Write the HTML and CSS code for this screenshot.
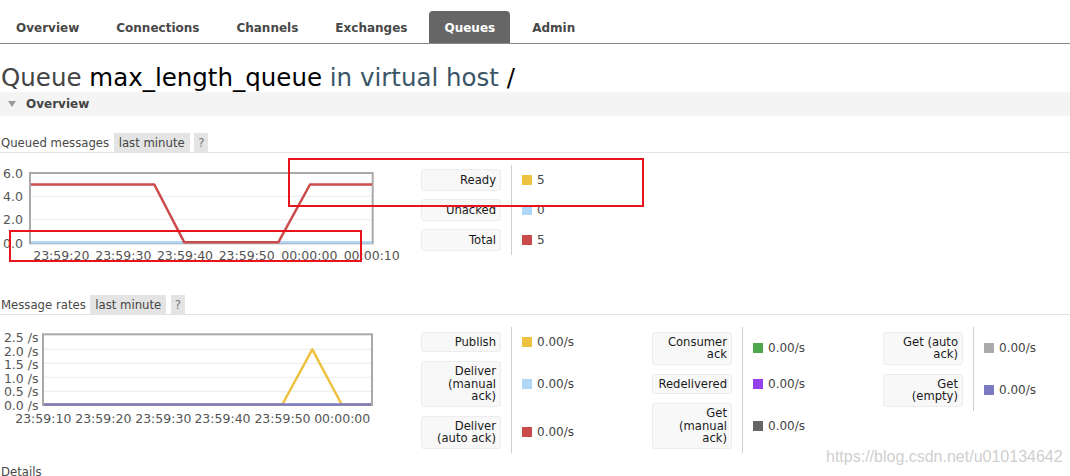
FILE: index.html
```html
<!DOCTYPE html>
<html>
<head>
<meta charset="utf-8">
<title>RabbitMQ Management</title>
<link rel="stylesheet" href="styles.css">
</head>
<body>
<nav class="tabs">
  <a class="tab">Overview</a>
  <a class="tab">Connections</a>
  <a class="tab">Channels</a>
  <a class="tab">Exchanges</a>
  <a class="tab active">Queues</a>
  <a class="tab">Admin</a>
</nav>

<h1 class="title">Queue <b>max_length_queue</b> <span class="vh">in virtual host</span> <b>/</b></h1>

<div class="bar"><span class="tri"></span>Overview</div>

<div class="sub"><span>Queued messages</span><span class="pill">last minute</span><span class="pill q">?</span></div>
<div class="panel">
  <svg class="chart" width="421" height="125" viewBox="0 153 421 125">
    <line class="grid" x1="31" y1="196.3" x2="372" y2="196.3"/>
    <line class="grid" x1="31" y1="219.7" x2="372" y2="219.7"/>
    <rect class="frame" x="30" y="173" width="342.7" height="70.3"/>
    <polyline class="ln ln-blue" points="31,242.3 372,242.3"/>
    <polyline class="ln ln-red" points="31,184.5 154.3,184.5 184.3,242.3 278.3,242.3 310,184.5 372,184.5"/>
    <text class="yl" x="23" y="178">6.0</text>
    <text class="yl" x="23" y="201.4">4.0</text>
    <text class="yl" x="23" y="224.4">2.0</text>
    <text class="yl" x="23" y="248">0.0</text>
    <text class="xl" x="61.3" y="260.3">23:59:20</text>
    <text class="xl" x="123.3" y="260.3">23:59:30</text>
    <text class="xl" x="185" y="260.3">23:59:40</text>
    <text class="xl" x="246.7" y="260.3">23:59:50</text>
    <text class="xl" x="309.3" y="260.3">00:00:00</text>
    <text class="xl" x="371.7" y="260.3">00:00:10</text>
  </svg>
  <div class="facts facts-q">
    <div class="group">
      <div class="th"><div class="box">Ready</div></div>
      <div class="td"><span class="sw c-yellow"></span>5</div>
      <div class="th"><div class="box">Unacked</div></div>
      <div class="td"><span class="sw c-lblue"></span>0</div>
      <div class="th"><div class="box">Total</div></div>
      <div class="td"><span class="sw c-red"></span>5</div>
    </div>
  </div>
</div>

<div class="sub"><span>Message rates</span><span class="pill">last minute</span><span class="pill q">?</span></div>
<div class="panel">
  <svg class="chart" width="421" height="130" viewBox="0 315 421 130">
    <line class="grid" x1="44" y1="349.3" x2="371" y2="349.3"/>
    <line class="grid" x1="44" y1="363.3" x2="371" y2="363.3"/>
    <line class="grid" x1="44" y1="377.3" x2="371" y2="377.3"/>
    <line class="grid" x1="44" y1="391.3" x2="371" y2="391.3"/>
    <rect class="frame" x="43" y="334.3" width="329" height="70.7"/>
    <polyline class="ln ln-yellow" points="44,404.5 282.3,404.5 312.3,349.3 341.7,404.5 371,404.5"/>
    <polyline class="ln ln-purple" points="44,404.5 371,404.5"/>
    <text class="yl" x="38.5" y="342">2.5 /s</text>
    <text class="yl" x="38.5" y="355.6">2.0 /s</text>
    <text class="yl" x="38.5" y="369.2">1.5 /s</text>
    <text class="yl" x="38.5" y="382.8">1.0 /s</text>
    <text class="yl" x="38.5" y="396.4">0.5 /s</text>
    <text class="yl" x="38.5" y="410">0.0 /s</text>
    <text class="xl" x="43.3" y="422.5">23:59:10</text>
    <text class="xl" x="103.3" y="422.5">23:59:20</text>
    <text class="xl" x="163.3" y="422.5">23:59:30</text>
    <text class="xl" x="222.5" y="422.5">23:59:40</text>
    <text class="xl" x="282.5" y="422.5">23:59:50</text>
    <text class="xl" x="342.2" y="422.5">00:00:00</text>
  </svg>
  <div class="facts">
    <div class="group">
      <div class="th"><div class="box">Publish</div></div>
      <div class="td"><span class="sw c-yellow"></span>0.00/s</div>
      <div class="th"><div class="box">Deliver<br>(manual<br>ack)</div></div>
      <div class="td"><span class="sw c-lblue"></span>0.00/s</div>
      <div class="th"><div class="box">Deliver<br>(auto ack)</div></div>
      <div class="td"><span class="sw c-red"></span>0.00/s</div>
    </div>
    <div class="group">
      <div class="th"><div class="box">Consumer<br>ack</div></div>
      <div class="td"><span class="sw c-green"></span>0.00/s</div>
      <div class="th"><div class="box">Redelivered</div></div>
      <div class="td"><span class="sw c-purple"></span>0.00/s</div>
      <div class="th"><div class="box">Get<br>(manual<br>ack)</div></div>
      <div class="td"><span class="sw c-dgray"></span>0.00/s</div>
    </div>
    <div class="group">
      <div class="th"><div class="box">Get (auto<br>ack)</div></div>
      <div class="td"><span class="sw c-gray"></span>0.00/s</div>
      <div class="th"><div class="box">Get<br>(empty)</div></div>
      <div class="td"><span class="sw c-slate"></span>0.00/s</div>
    </div>
  </div>
</div>

<div class="sub sub-details"><span>Details</span></div>

<div class="mark mark-ready"></div>
<div class="mark mark-axis"></div>
<div class="wm">https://blog.csdn.net/u010134642</div>
</body>
</html>
```

FILE: styles.css
```css
html {
  overflow: hidden;
}

body {
  margin: 0;
  background: #fff;
  color: #444;
  font-family: "DejaVu Sans", Verdana, sans-serif;
}

/* top tab bar */
.tabs {
  display: flex;
  gap: 7px;
  padding: 11px 0 0 1px;
  border-bottom: 1px solid #888;
}

.tab {
  padding: 2px 15px 0;
  line-height: 30px;
  font-size: 12px;
  font-weight: bold;
  color: #484848;
  border-radius: 4px 4px 0 0;
}

.tab.active {
  background: #666;
  color: #fff;
}

/* heading */
.title {
  margin: 20px 0 0 1px;
  font-size: 24.5px;
  font-weight: normal;
  line-height: 28px;
  height: 28px;
  color: #444;
  white-space: nowrap;
}

.title b {
  font-weight: normal;
  color: #000;
}

.title .vh {
  color: #3b5568;
}

/* collapsible section bar */
.bar {
  display: flex;
  align-items: center;
  height: 24px;
  background: #f4f4f4;
  font-size: 12px;
  font-weight: bold;
  color: #444;
}

.tri {
  width: 0;
  height: 0;
  border-left: 4px solid transparent;
  border-right: 4px solid transparent;
  border-top: 6px solid #9a9a9a;
  margin: 0 10px 0 8px;
}

/* sub headings */
.sub {
  display: flex;
  gap: 4.5px;
  height: 19px;
  line-height: 20px;
  margin-top: 17px;
  padding-left: 1px;
  border-bottom: 1px solid #e2e2e2;
  font-size: 11.7px;
  color: #484848;
  white-space: nowrap;
}

.sub-details {
  margin-top: 9px;
}

.pill {
  background: #e4e4e4;
  padding: 0 5px;
  color: #444;
}

.pill.q {
  padding: 0 4px;
  color: #777;
}

/* chart + facts */
.panel {
  display: flex;
  align-items: flex-start;
}

.chart {
  display: block;
  flex: none;
}

.chart .grid {
  stroke: #ececec;
  stroke-width: 1;
}

.chart .frame {
  fill: none;
  stroke: #a9a9a9;
  stroke-width: 2;
}

.chart .ln {
  fill: none;
  stroke-width: 2.5;
  stroke-linejoin: round;
}

.ln-red { stroke: #cb4b4b; }
.ln-blue { stroke: #afd8f8; }
.ln-yellow { stroke: #edc240; }
.ln-purple { stroke: #7c79c3; }

.chart text {
  font-family: "DejaVu Sans", Verdana, sans-serif;
  font-size: 12.5px;
  fill: #545454;
}

.chart .yl {
  text-anchor: end;
}

.chart .xl {
  text-anchor: middle;
}

.facts {
  display: flex;
  gap: 10px;
  margin-top: 12px;
}

.group {
  display: grid;
  grid-template-columns: 90px 131px;
  align-content: start;
}

.th {
  padding: 4.5px 10px 4.5px 0;
}

.facts-q .th {
  padding: 4px 10px 4.5px 0;
}

.facts-q .box {
  padding: 3.5px 4px;
}

.box {
  background: #f8f8f8;
  border: 1px solid #ececec;
  border-radius: 3px;
  padding: 3px 4px;
  text-align: right;
  font-size: 11.6px;
  line-height: 12.5px;
  color: #1a1a1a;
  white-space: nowrap;
}

.td {
  display: flex;
  align-items: center;
  border-left: 1px solid #cfcfcf;
  padding-left: 10px;
  font-size: 12px;
  color: #444;
}

.sw {
  width: 10px;
  height: 10px;
  margin-right: 5px;
  flex: none;
}

.c-yellow { background: #edc240; }
.c-lblue { background: #afd8f8; }
.c-red { background: #cb4b4b; }
.c-green { background: #4da74d; }
.c-purple { background: #9440ed; }
.c-dgray { background: #666; }
.c-gray { background: #aaa; }
.c-slate { background: #7c79c3; }

/* annotation overlays */
.mark {
  position: absolute;
  box-sizing: border-box;
  border: 2px solid #e8141c;
}

.mark-ready {
  left: 288px;
  top: 158px;
  width: 356px;
  height: 49px;
}

.mark-axis {
  left: 9px;
  top: 230px;
  width: 353px;
  height: 32px;
}

.wm {
  position: absolute;
  left: 826px;
  top: 448px;
  font-family: "Liberation Sans", Arial, sans-serif;
  font-size: 16px;
  line-height: 18px;
  color: #cfcfcf;
  white-space: nowrap;
}
```
